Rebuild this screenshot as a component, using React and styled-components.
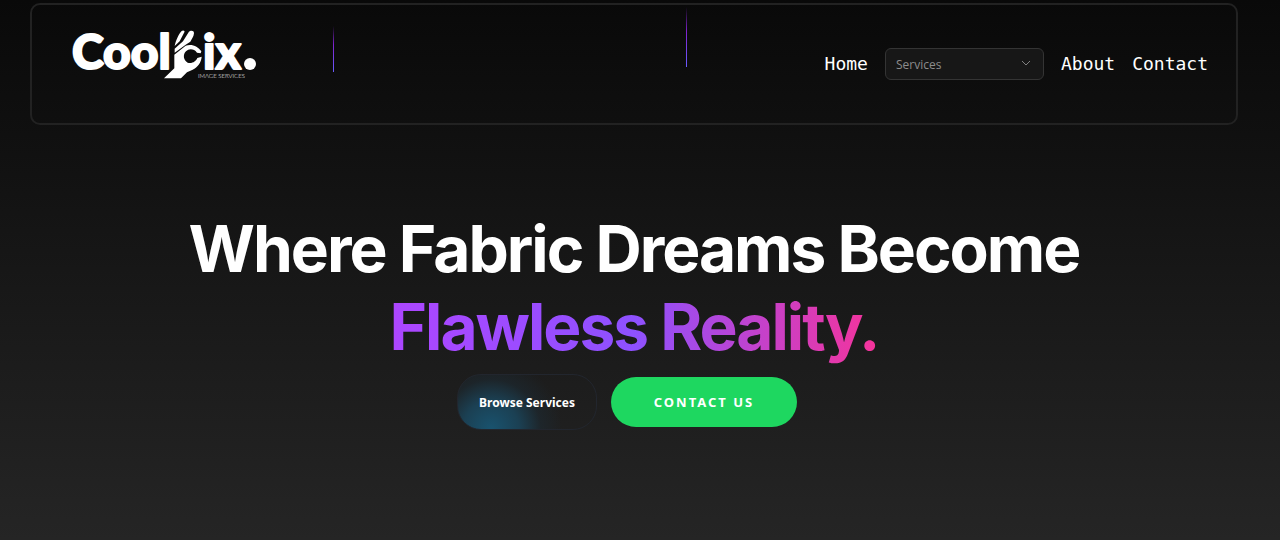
import React from "react";
import styled, { createGlobalStyle } from "styled-components";

const GlobalStyle = createGlobalStyle`
  * { box-sizing: border-box; }
  html, body { margin: 0; background: #262626; }
`;

const Page = styled.div`
  min-height: 100vh;
  padding: 3px 42px 0 30px;
  background: linear-gradient(180deg, #090909 0%, #252525 100%);
  color: #fff;
  font-family: "Noto Sans", "Open Sans", sans-serif;
`;

const Header = styled.header`
  position: relative;
  display: flex;
  justify-content: space-between;
  align-items: flex-start;
  min-height: 122px;
  padding: 13px 28px 0 38px;
  border: 2px solid #222;
  border-radius: 10px;
`;

const Beam = styled.span`
  position: absolute;
  left: ${(p) => p.$left};
  top: ${(p) => p.$top}px;
  width: 1px;
  height: ${(p) => p.$length}px;
  background: linear-gradient(180deg, rgba(126, 34, 206, 0), #7e22ce 40%, #6a5cff);
`;

const LogoLink = styled.a`
  display: block;
  color: #fff;
  svg { display: block; }
`;

const Nav = styled.nav`
  display: flex;
  align-items: center;
  gap: 17px;
  padding-top: 30px;
`;

const NavLink = styled.a`
  color: #fff;
  font: 500 18px/32px "DejaVu Sans Mono", "Liberation Mono", monospace;
  text-decoration: none;
`;

const SelectWrap = styled.div`
  position: relative;
  svg {
    position: absolute;
    right: 13px;
    top: 10px;
    pointer-events: none;
  }
`;

const Select = styled.select`
  display: block;
  appearance: none;
  width: 159px;
  height: 32px;
  padding: 2px 30px 0 10px;
  border: 1px solid #343434;
  border-radius: 6px;
  background: #171717;
  color: #8c8c8c;
  font: 400 12px/16px "Open Sans", "Noto Sans", sans-serif;
`;

const Hero = styled.main`
  display: flex;
  flex-direction: column;
  align-items: center;
  padding-top: 85px;
`;

const Title = styled.h1`
  margin: 0;
  text-align: center;
  font: 700 64px/78px Inter, "Liberation Sans", sans-serif;
  letter-spacing: -2px;
`;

const Accent = styled.span`
  display: block;
  width: fit-content;
  margin: 0 auto;
  background: linear-gradient(90deg, #ad46ff, #8e51ff 50%, #f6339a);
  background-clip: text;
  color: transparent;
`;

const Actions = styled.div`
  display: flex;
  align-items: center;
  gap: 14px;
  padding-top: 8px;
  margin-right: 14px;
`;

const BrowseButton = styled.button`
  width: 140px;
  height: 56px;
  padding: 2px 0 0;
  border: 1px solid #22262e;
  border-radius: 24px;
  background: radial-gradient(circle at 24% 100%, #19536f 0%, #1b4053 24%, rgba(28, 44, 54, 0.5) 42%, transparent 60%);
  color: #fff;
  font: 700 12px/16px "Noto Sans", sans-serif;
`;

const ContactButton = styled.button`
  width: 186px;
  height: 50px;
  padding: 0;
  border: 0;
  border-radius: 25px;
  background: #1ed760;
  color: #fff;
  font: 700 13px/18px "Noto Sans", sans-serif;
  letter-spacing: 2px;
`;

const Wordmark = styled.text`
  font: 900 48px Lato, sans-serif;
  stroke: #fff;
  stroke-width: 2px;
  stroke-linejoin: round;
`;

function Logo() {
  return (
    <svg width="190" height="70" viewBox="0 -10 190 70" fill="#fff" role="img" aria-label="Coolpix image services">
      <Wordmark x="2" y="41">Cool</Wordmark>
      <g transform="translate(85 -8) scale(0.3333)">
        <path d="M27 175 L58 145 V104 L92 77 C112 71 129 80 139 94 L137 100 L126 98 C117 86 102 85 93 94 C83 104 85 121 98 128 C111 132 123 124 127 114 L140 110 C139 127 128 142 113 149 L96 157 L78 175 Z" />
        <path d="M59 98 V86 L84 64 L100 38 C104 31 117 30 117 40 C116 50 110 58 106 65 L92 74 Z" />
        <path d="M59 78 C63 60 71 42 80 33 C84 29 91 32 88 37 L74 64 Z" />
      </g>
      <Wordmark x="133" y="41">ix</Wordmark>
      <circle cx="180" cy="36" r="6" />
      <text x="128" y="50" fontFamily="Lato, sans-serif" fontWeight="300" fontSize="6">IMAGE SERVICES</text>
    </svg>
  );
}

export default function App() {
  return (
    <>
      <GlobalStyle />
      <Page>
        <Header>
          <Beam $left="25%" $top={21} $length={46} />
          <Beam $left="calc(54% + 4px)" $top={2} $length={60} />
          <LogoLink href="#home"><Logo /></LogoLink>
          <Nav>
            <NavLink href="#home">Home</NavLink>
            <SelectWrap>
              <Select aria-label="Services" defaultValue="Services">
                <option>Services</option>
              </Select>
              <svg width="10" height="10" viewBox="0 0 10 10" fill="none" stroke="#808080" aria-hidden="true">
                <path d="M1 3 L5 7 L9 3" />
              </svg>
            </SelectWrap>
            <NavLink href="#about">About</NavLink>
            <NavLink href="#contact">Contact</NavLink>
          </Nav>
        </Header>
        <Hero>
          <Title>
            Where Fabric Dreams Become
            <Accent>Flawless Reality.</Accent>
          </Title>
          <Actions>
            <BrowseButton type="button">Browse Services</BrowseButton>
            <ContactButton type="button">CONTACT US</ContactButton>
          </Actions>
        </Hero>
      </Page>
    </>
  );
}
